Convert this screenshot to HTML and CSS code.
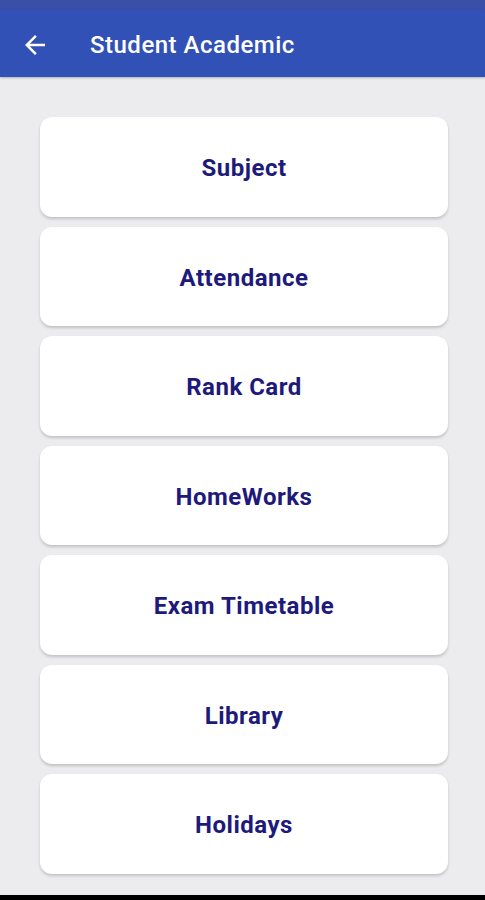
FILE: index.html
```html
<!DOCTYPE html>
<html lang="en">
<head>
    <meta charset="UTF-8">
    <meta name="viewport" content="width=device-width, initial-scale=1.0">
    <title>Student Academic</title>
    <link rel="stylesheet" href="styles.css">
</head>
<body>

    <div class="statusbar"></div>

    <div class="toolbar">
        <svg class="back" width="30" height="30" viewBox="0 0 24 24">
            <path d="M20 11H7.83l5.59-5.59L12 4l-8 8 8 8 1.41-1.41L7.83 13H20v-2z" fill="#fff"/>
        </svg>
        <h1>Student Academic</h1>
    </div>

    <div class="menu">
        <div class="card">Subject</div>
        <div class="card">Attendance</div>
        <div class="card">Rank Card</div>
        <div class="card">HomeWorks</div>
        <div class="card">Exam Timetable</div>
        <div class="card">Library</div>
        <div class="card">Holidays</div>
    </div>

    <div class="navbar"></div>

</body>
</html>
```
FILE: styles.css
```css
* {
    margin: 0;
    padding: 0;
    box-sizing: border-box;
}

body {
    font-family: Roboto, "Noto Sans", sans-serif;
    background-color: #ecebee;
    height: 900px;
    display: flex;
    flex-direction: column;
    overflow: hidden;
}

.statusbar {
    height: 9px;
    background-color: #3a4fa6;
}

.toolbar {
    height: 68px;
    background-color: #3151b6;
    display: flex;
    align-items: center;
    padding-left: 20px;
    padding-top: 3px;
    box-shadow: 0px 1px 2px rgba(0, 0, 0, 0.25);
}

.back {
    margin-right: 40px;
}

.toolbar h1 {
    color: white;
    font-size: 24px;
    font-weight: 500;
    letter-spacing: 0.5px;
}

.menu {
    flex: 1;
    display: flex;
    flex-direction: column;
    gap: 10px;
    padding: 40px 37px 0 40px;
}

.card {
    height: 99.5px;
    padding-top: 3px;
    background-color: white;
    border-radius: 12px;
    box-shadow: 0px 2px 3px rgba(0, 0, 0, 0.18);
    display: flex;
    align-items: center;
    justify-content: center;
    color: #1d1a7c;
    font-size: 24px;
    font-weight: 700;
    letter-spacing: 0.5px;
}

.navbar {
    height: 5px;
    background-color: #000;
}
```
